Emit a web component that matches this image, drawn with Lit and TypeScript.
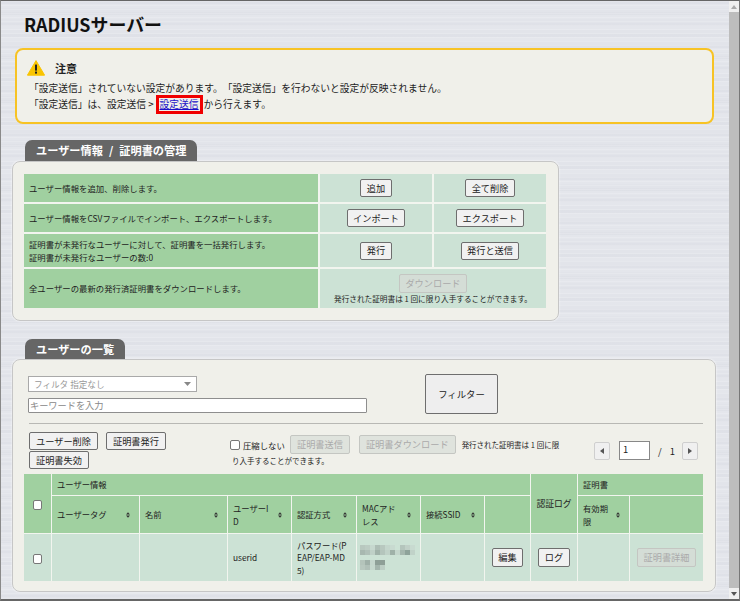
import { LitElement, html, css } from "lit";
import { customElement } from "lit/decorators.js";

const sortIcon = html`<svg class="sort" width="4" height="6" viewBox="0 0 5 7"><path d="M2.5 0L5 3H0zM2.5 7L0 4h5z" fill="#333"/></svg>`;

const mosaicRows = [
  ["b8c8bf","bcccc3","c6d8ce","adbeb5","b8c8bf","c4d6cc","c8dad0","cce2d5","b4c5bc","c0d0c7","c8dad0"],
  ["a8b8b0","b0c0b8","bfd0c7","a0b2a9","b4c5bc","c0d2c8","9fb1a8","c4d6cc","a5b7ae","8ea39a","c0d2c8"],
  [],
  ["b4c4bb","9fb0a8","c5d6cd","8e9f97","8e9f97"],
  ["b8c8bf","b0c0b8","c6d8ce","a4b5ad","bccdc4"],
];

@customElement("app-root")
export class AppRoot extends LitElement {
  static styles = css`
    :host {
      display: block;
      width: 740px;
      height: 601px;
      overflow: hidden;
      box-sizing: border-box;
      font-family: "Noto Sans CJK JP", "Liberation Sans", sans-serif;
      font-size: 9.5px;
      color: #222;
      text-spacing-trim: space-all;
    }
    * { box-sizing: border-box; }
    .window {
      width: 740px;
      height: 601px;
      display: flex;
      border-top: 1px solid #666;
      border-left: 1px solid #8a8a8a;
      border-right: 1px solid #777;
      border-bottom: 2px solid #666;
      background-color: #e2e4ea;
      background-image:
        repeating-linear-gradient(180deg, rgba(255,255,255,.14) 0 1px, rgba(255,255,255,0) 1px 4px),
        repeating-linear-gradient(180deg, rgba(205,208,218,.14) 0 3px, rgba(255,255,255,.08) 3px 7px, rgba(200,204,214,0) 7px 11px);
    }
    .content {
      flex: 1;
      min-width: 0;
      overflow: hidden;
      padding: 0 0 0 11px;
    }
    .scroll {
      width: 10px;
      background: #f0f0f0;
      display: flex;
      flex-direction: column;
      align-items: center;
      font-size: 0;
    }
    .scroll .arrow { height: 11px; width: 100%; display: flex; align-items: center; justify-content: center; }
    .scroll .thumb { flex: 1; width: 100%; background: #bdbdbd; }
    h1 {
      margin: 13px 0 0 12px;
      font-size: 17.9px;
      line-height: 20px;
      height: 34px;
      font-weight: 700;
      color: #111;
    }
    .notice {
      margin-left: 3px;
      width: 699px;
      height: 76px;
      border: 2px solid #f7c325;
      border-radius: 8px;
      background: #f0f0ea;
      padding: 8px 0 0 10px;
    }
    .notice-head { display: flex; align-items: center; gap: 10px; height: 20px; font-weight: 700; font-size: 11px; margin-bottom: 2px; }
    .notice-head span { line-height: 20px; }
    .notice p { margin: 0 0 0 2px; height: 16px; font-size: 9.75px; white-space: nowrap; line-height: 16px; }
    .hl {
      display: inline-block;
      border: 3px solid #f00000;
      padding: 0 1px;
      line-height: 13px;
      margin: -3px 1px -3px 2px;
      height: 19px;
    }
    .hl a { color: #1a10c8; text-decoration: underline; }
    .tab {
      display: inline-block;
      margin-left: 13px;
      height: 100%;
      padding: 0 11px;
      background: #666;
      color: #fff;
      font-weight: 700;
      font-size: 11.2px;
      line-height: 20px;
      border-radius: 7px 7px 0 0;
      vertical-align: top;
      word-spacing: 3.5px;
    }
    .tabrow { font-size: 0; }
    .tabrow.first { margin-top: 16px; height: 21px; }
    .tabrow.second { margin-top: 18px; height: 20px; }
    .panel {
      background: #f0f0ea;
      border: 1px solid #c6c6c6;
      border-radius: 8px;
      box-shadow: 0 0 2px #fff;
    }
    .p1 { width: 547px; height: 160px; padding: 12px 11px; }
    .p2 { width: 704px; height: 233px; padding: 12px 12px 0 11px; }
    table { border-collapse: separate; border-spacing: 0; table-layout: fixed; }
    .t1 { width: 522px; }
    .t1 td { border-right: 2px solid #f2f5ef; border-bottom: 2px solid #f2f5ef; padding: 0 5px; font-size: 8.4px; line-height: 12.5px; white-space: nowrap; }
    .t1 td:last-child { border-right: 0; }
    .t1 tr:last-child td { border-bottom: 0; }
    .lbl { background: #a0d0a0; }
    .act { background: #cce2d5; text-align: center; }
    button {
      font: inherit;
      color: #222;
      background: #f1f1f1;
      border: 1px solid #6e6e6e;
      border-radius: 2px;
      padding: 0 5.5px;
      height: 18px;
      line-height: 15px;
      font-size: 9.2px;
      white-space: nowrap;
    }
    button[disabled] { color: #aaa; background: #dfe3dd; border-color: #c4c6c2; height: 19px; }
    .t1 button[disabled] { background: #d4ddd6; }
    .note { font-size: 7.65px; line-height: 11px; white-space: nowrap; margin-top: 0; color: #222; }
    .filters { display: flex; align-items: flex-start; height: 51px; }
    .fl { width: 340px; margin-left: 4px; margin-top: 4px; }
    .sel {
      width: 169px;
      height: 16px;
      background: #fff;
      border: 1px solid #a9a9a9;
      display: flex;
      align-items: center;
      justify-content: space-between;
      padding: 0 5px;
      color: #999;
      font-size: 8.6px;
    }
    .kw {
      margin-top: 6px;
      width: 339px;
      height: 15px;
      background: #fff;
      border: 1px solid #8e8e8e;
      padding-left: 1px;
      line-height: 13px;
      color: #888;
      font-size: 9.2px;
      border-radius: 1px;
    }
    .fbtn {
      margin-left: 57px;
      margin-top: 2px;
      width: 73px;
      height: 40px;
      background: #eeeeee;
      border-radius: 2px;
      font-size: 9.4px;
    }
    hr { border: 0; border-top: 1px solid #b8b8b4; margin: 0 0 0 5px; width: 674px; height: 1px; }
    .tools { display: flex; height: 50px; padding-left: 5px; padding-top: 8px; }
    .tleft { width: 141px; display: flex; flex-wrap: wrap; gap: 1px 8px; align-content: flex-start; }
    .tleft button { padding: 0 6px; }
    .tmid { width: 336px; margin-left: 60px; margin-top: 3px; font-size: 7.5px; line-height: 14px; }
    .tmid .line { display: flex; align-items: center; white-space: nowrap; height: 19px; }
    .tmid .cb { display: flex; align-items: center; gap: 3px; font-size: 8.4px; width: 60px; }
    .tmid .line button { margin-right: 9px; padding: 0 6px; }
    .tmid .line button + span { margin-left: -3px; }
    .tmid .second { margin-top: 0; margin-left: 2px; white-space: nowrap; }
    .check { width: 10px; height: 10px; background: #fff; border: 1px solid #777; border-radius: 2px; display: inline-block; flex: none; }
    .t2 .check { width: 9px; height: 10px; vertical-align: middle; }
    .pager { display: flex; align-items: center; margin-left: 28px; margin-top: 9px; height: 19px; font-size: 9.4px; }
    .pgb { width: 16px; height: 18px; background: #f0f0f0; border: 1px solid #cfcfcf; border-radius: 2px; display: flex; align-items: center; justify-content: center; }
    .pgi { width: 31px; height: 19px; margin-left: 9px; background: #fff; border: 1px solid #888; padding-left: 3px; line-height: 15px; }
    .pgt { width: 32px; padding-left: 8px; white-space: nowrap; letter-spacing: 3px; }
    .t2 { width: 679px; }
    .t2 th, .t2 td {
      font-weight: 400;
      font-size: 8.3px;
      line-height: 13px;
      border-right: 1.5px solid #f2f5ef;
      border-bottom: 1.5px solid #f2f5ef;
      padding: 0 5px;
      text-align: left;
      white-space: nowrap;
    }
    .t2 td { line-height: 12.5px; }
    .t2 th:last-child, .t2 td:last-child { border-right: 0; }
    .t2 tbody td { border-bottom: 0; }
    .t2 th { background: #a0d0a0; }
    .t2 td { background: #cce2d5; }
    .t2 .c { text-align: center; padding: 0; }
    .t2 th.wide { font-size: 8.8px; }
    .sh { display: flex; align-items: center; justify-content: space-between; gap: 2px; }
    .sh .sort { flex: none; margin-right: 4px; }
    .mosaic { margin-left: -2px; display: flex; flex-direction: column; }
    .mrow { display: flex; height: 5px; }
    .mrow i { display: block; width: 5px; height: 5px; }
    .t2 button { height: 19px; padding: 0 5.5px; }
    .t2 button[disabled] { background: #d4ddd6; }
  `;

  private mosaic() {
    return html`<div class="mosaic">
      ${mosaicRows.map(
        (row) => html`<div class="mrow">${row.map((c) => html`<i style="background:#${c}"></i>`)}</div>`
      )}
    </div>`;
  }

  render() {
    return html`
      <div class="window">
        <div class="content">
          <h1>RADIUSサーバー</h1>
          <div class="notice">
            <div class="notice-head">
              <svg width="18" height="16" viewBox="0 0 18 16">
                <path d="M9 0.6L17.6 15.2H0.4z" fill="#f9c400" stroke="#f9c400" stroke-linejoin="round"/>
                <rect x="8" y="4.6" width="2" height="6" fill="#222"/>
                <rect x="8" y="11.6" width="2" height="2" fill="#222"/>
              </svg>
              <span>注意</span>
            </div>
            <p>「設定送信」されていない設定があります。「設定送信」を行わないと設定が反映されません。</p>
            <p>「設定送信」は、設定送信 &gt;<span class="hl"><a href="#">設定送信</a></span>から行えます。</p>
          </div>

          <div class="tabrow first"><span class="tab">ユーザー情報 / 証明書の管理</span></div>
          <div class="panel p1">
            <table class="t1">
              <colgroup><col style="width:296px" /><col style="width:114px" /><col style="width:112px" /></colgroup>
              <tr style="height:30px">
                <td class="lbl">ユーザー情報を追加、削除します。</td>
                <td class="act"><button>追加</button></td>
                <td class="act"><button>全て削除</button></td>
              </tr>
              <tr style="height:30px">
                <td class="lbl">ユーザー情報をCSVファイルでインポート、エクスポートします。</td>
                <td class="act"><button>インポート</button></td>
                <td class="act"><button>エクスポート</button></td>
              </tr>
              <tr style="height:35px">
                <td class="lbl">証明書が未発行なユーザーに対して、証明書を一括発行します。<br />証明書が未発行なユーザーの数:0</td>
                <td class="act"><button>発行</button></td>
                <td class="act"><button>発行と送信</button></td>
              </tr>
              <tr style="height:39px">
                <td class="lbl">全ユーザーの最新の発行済証明書をダウンロードします。</td>
                <td class="act" colspan="2">
                  <button disabled>ダウンロード</button>
                  <div class="note">発行された証明書は 1 回に限り入手することができます。</div>
                </td>
              </tr>
            </table>
          </div>

          <div class="tabrow second"><span class="tab">ユーザーの一覧</span></div>
          <div class="panel p2">
            <div class="filters">
              <div class="fl">
                <div class="sel"><span>フィルタ 指定なし</span>
                  <svg width="7" height="4" viewBox="0 0 7 4"><path d="M0 0h7L3.5 4z" fill="#888"/></svg>
                </div>
                <div class="kw">キーワードを入力</div>
              </div>
              <button class="fbtn">フィルター</button>
            </div>
            <hr />
            <div class="tools">
              <div class="tleft">
                <button>ユーザー削除</button>
                <button>証明書発行</button>
                <button>証明書失効</button>
              </div>
              <div class="tmid">
                <div class="line">
                  <span class="cb"><span class="check"></span>圧縮しない</span>
                  <button disabled>証明書送信</button>
                  <button disabled>証明書ダウンロード</button>
                  <span>発行された証明書は 1 回に限</span>
                </div>
                <div class="second">り入手することができます。</div>
              </div>
              <div class="pager">
                <span class="pgb"><svg width="4" height="6" viewBox="0 0 4 6"><path d="M4 0v6L0 3z" fill="#555"/></svg></span>
                <span class="pgi">1</span>
                <span class="pgt">/ 1</span>
                <span class="pgb"><svg width="4" height="6" viewBox="0 0 4 6"><path d="M0 0v6l4-3z" fill="#555"/></svg></span>
              </div>
            </div>
            <table class="t2">
              <colgroup>
                <col style="width:28px" /><col style="width:88px" /><col style="width:88px" /><col style="width:64px" />
                <col style="width:65px" /><col style="width:64px" /><col style="width:64px" /><col style="width:46px" />
                <col style="width:47px" /><col style="width:52px" /><col style="width:73px" />
              </colgroup>
              <thead>
                <tr style="height:22px">
                  <th class="c" rowspan="2"><span class="check"></span></th>
                  <th colspan="7">ユーザー情報</th>
                  <th class="c wide" rowspan="2">認証ログ</th>
                  <th colspan="2">証明書</th>
                </tr>
                <tr style="height:38px">
                  <th><div class="sh"><span>ユーザータグ</span>${sortIcon}</div></th>
                  <th><div class="sh"><span>名前</span>${sortIcon}</div></th>
                  <th><div class="sh"><span>ユーザーI<br />D</span>${sortIcon}</div></th>
                  <th><div class="sh"><span>認証方式</span>${sortIcon}</div></th>
                  <th><div class="sh"><span>MACアド<br />レス</span>${sortIcon}</div></th>
                  <th><div class="sh"><span>接続SSID</span>${sortIcon}</div></th>
                  <th></th>
                  <th><div class="sh"><span>有効期<br />限</span>${sortIcon}</div></th>
                  <th></th>
                </tr>
              </thead>
              <tbody>
                <tr style="height:47px">
                  <td class="c"><span class="check"></span></td>
                  <td></td>
                  <td></td>
                  <td>userid</td>
                  <td>パスワード(P<br />EAP/EAP-MD<br />5)</td>
                  <td>${this.mosaic()}</td>
                  <td></td>
                  <td class="c"><button>編集</button></td>
                  <td class="c"><button>ログ</button></td>
                  <td></td>
                  <td class="c"><button disabled>証明書詳細</button></td>
                </tr>
              </tbody>
            </table>
          </div>
        </div>
        <div class="scroll">
          <div class="arrow"><svg width="6" height="4" viewBox="0 0 6 4"><path d="M3 0l3 4H0z" fill="#aaa"/></svg></div>
          <div class="thumb"></div>
          <div class="arrow"><svg width="6" height="4" viewBox="0 0 6 4"><path d="M0 0h6L3 4z" fill="#555"/></svg></div>
        </div>
      </div>
    `;
  }
}
